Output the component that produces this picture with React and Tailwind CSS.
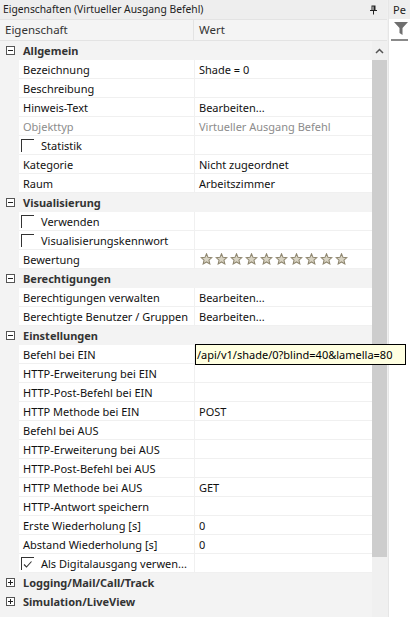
import React from 'react'

const F = { fontFamily: '"Noto Sans", "Open Sans", sans-serif' }

const rows = [
  { g: 'Allgemein', open: true },
  { n: 'Bezeichnung', v: 'Shade = 0' },
  { n: 'Beschreibung' },
  { n: 'Hinweis-Text', v: 'Bearbeiten...' },
  { n: 'Objekttyp', v: 'Virtueller Ausgang Befehl', dim: true },
  { n: 'Statistik', cb: false },
  { n: 'Kategorie', v: 'Nicht zugeordnet' },
  { n: 'Raum', v: 'Arbeitszimmer' },
  { g: 'Visualisierung', open: true },
  { n: 'Verwenden', cb: false },
  { n: 'Visualisierungskennwort', cb: false },
  { n: 'Bewertung', stars: true },
  { g: 'Berechtigungen', open: true },
  { n: 'Berechtigungen verwalten', v: 'Bearbeiten...' },
  { n: 'Berechtigte Benutzer / Gruppen', v: 'Bearbeiten...' },
  { g: 'Einstellungen', open: true },
  { n: 'Befehl bei EIN', edit: '/api/v1/shade/0?blind=40&lamella=80' },
  { n: 'HTTP-Erweiterung bei EIN' },
  { n: 'HTTP-Post-Befehl bei EIN' },
  { n: 'HTTP Methode bei EIN', v: 'POST' },
  { n: 'Befehl bei AUS' },
  { n: 'HTTP-Erweiterung bei AUS' },
  { n: 'HTTP-Post-Befehl bei AUS' },
  { n: 'HTTP Methode bei AUS', v: 'GET' },
  { n: 'HTTP-Antwort speichern' },
  { n: 'Erste Wiederholung [s]', v: '0' },
  { n: 'Abstand Wiederholung [s]', v: '0' },
  { n: 'Als Digitalausgang verwen...', cb: true },
  { g: 'Logging/Mail/Call/Track', open: false },
  { g: 'Simulation/LiveView', open: false },
]

function Toggle({ open }) {
  return (
    <svg width="9" height="9" viewBox="0 0 9 9" className="shrink-0">
      <rect x="0.5" y="0.5" width="8" height="8" fill="#fff" stroke="#555" />
      <line x1="2" y1="4.5" x2="7" y2="4.5" stroke="#222" />
      {!open && <line x1="4.5" y1="2" x2="4.5" y2="7" stroke="#222" />}
    </svg>
  )
}

function Check({ on }) {
  return (
    <span className="relative inline-block w-[13px] h-[13px] border-t border-l border-[#333] shrink-0">
      {on && (
        <svg width="10" height="9" viewBox="0 0 10 9" className="absolute left-[1px] top-[2px]">
          <path d="M1 4.5 L3.5 7 L8.5 1.5" fill="none" stroke="#333" strokeWidth="1.1" />
        </svg>
      )}
    </span>
  )
}

function Star() {
  return (
    <svg width="13" height="12" viewBox="0 0 24 23">
      <path
        d="M12 1.5 L14.9 8.3 L22.3 8.9 L16.7 13.8 L18.4 21 L12 17.2 L5.6 21 L7.3 13.8 L1.7 8.9 L9.1 8.3 Z"
        fill="#d9d4c4"
        stroke="#8f8770"
        strokeWidth="2"
      />
    </svg>
  )
}

function Row({ r }) {
  if (r.g) {
    return (
      <div className="flex items-center h-[19px] bg-[#f3f3f3]">
        <div className="w-[19px] flex justify-center pl-[1px]">
          <Toggle open={r.open} />
        </div>
        <span className="pl-[4px] font-bold text-[#333]">{r.g}</span>
      </div>
    )
  }
  return (
    <div className="flex h-[19px] bg-[#f3f3f3]">
      <div className="w-[19px] shrink-0" />
      <div className="w-[175px] shrink-0 bg-white border-b border-[#f0f0f0] flex items-center pl-[4px] whitespace-nowrap overflow-hidden">
        {r.cb !== undefined ? (
          <span className="flex items-center gap-[7px] -ml-[2px]">
            <Check on={r.cb} />
            <span className="text-[#111]">{r.n}</span>
          </span>
        ) : (
          <span className={r.dim ? 'text-[#8c8c8c]' : 'text-[#111]'}>{r.n}</span>
        )}
      </div>
      <div className="w-[1px] bg-[#f0f0f0] shrink-0" />
      <div className="relative flex-1 bg-white border-b border-[#f0f0f0] flex items-center pl-[4px] whitespace-nowrap">
        {r.v && <span className={r.dim ? 'text-[#8c8c8c]' : 'text-[#111]'}>{r.v}</span>}
        {r.stars && (
          <span className="flex gap-[2px] pl-[1px]">
            {Array.from({ length: 10 }).map((_, i) => (
              <Star key={i} />
            ))}
          </span>
        )}
        {r.edit && (
          <div className="absolute left-0 top-[-1px] w-[211px] h-[21px] z-10 bg-[#ffffe1] border border-black flex items-center pl-[1px] text-black">
            {r.edit}
          </div>
        )}
      </div>
    </div>
  )
}

export default function App() {
  return (
    <div className="w-[410px] h-[617px] overflow-hidden flex bg-[#f0f0f0] text-[11px] leading-none" style={F}>
      {/* Properties panel */}
      <div className="w-[387px] shrink-0 flex flex-col">
        <div className="h-[19px] flex items-center justify-between pl-[3px] pr-[9px] bg-[#eeeeee] text-[#222]">
          <span className="text-[10.3px]">Eigenschaften (Virtueller Ausgang Befehl)</span>
          <svg width="9" height="10" viewBox="0 0 9 10">
            <path d="M2.5 0.5 H6.5 V5 H8 V6 H5 V9.5 H4 V6 H1 V5 H2.5 Z" fill="#222" />
            <rect x="3.5" y="1.5" width="1" height="3.5" fill="#eee" />
          </svg>
        </div>
        <div className="h-[22px] flex bg-[#f4f4f4] border-y border-[#e3e3e3]">
          <div className="w-[194px] flex items-center pl-[5px] border-r border-[#e3e3e3] text-[#333] text-[11.5px]">Eigenschaft</div>
          <div className="flex-1 flex items-center pl-[5px] text-[#333] text-[11.5px]">Wert</div>
        </div>
        <div className="flex flex-1 min-h-0">
          <div className="w-[372px] shrink-0 flex flex-col bg-[#f3f3f3]">
            {rows.map((r, i) => (
              <Row key={i} r={r} />
            ))}
          </div>
          <div className="w-[15px] flex flex-col bg-[#f0f0f0]">
            <div className="h-[19px] flex items-center justify-center">
              <svg width="9" height="6" viewBox="0 0 9 6">
                <path d="M1 5 L4.5 1.5 L8 5" fill="none" stroke="#555" strokeWidth="1.5" />
              </svg>
            </div>
            <div className="h-[497px] bg-[#cdcdcd]" />
          </div>
        </div>
      </div>
      {/* splitter */}
      <div className="w-[5px] bg-[#f0f0f0] border-r border-[#e6e6e6]" />
      {/* second panel */}
      <div className="flex-1 flex flex-col bg-white">
        <div className="h-[19px] flex items-center pl-[4px] bg-[#eeeeee] text-[#222] overflow-hidden whitespace-nowrap">Pe</div>
        <div className="h-[22px] pl-[3px] pt-[2px] border-b-[2px] border-[#8a8a8a] mx-[2px] flex items-start">
          <svg width="14" height="15" viewBox="0 0 14 15">
            <path d="M0 1 H14 L8.5 7 V14 L5.5 12 V7 Z" fill="#6f6f6f" />
          </svg>
        </div>
      </div>
    </div>
  )
}
